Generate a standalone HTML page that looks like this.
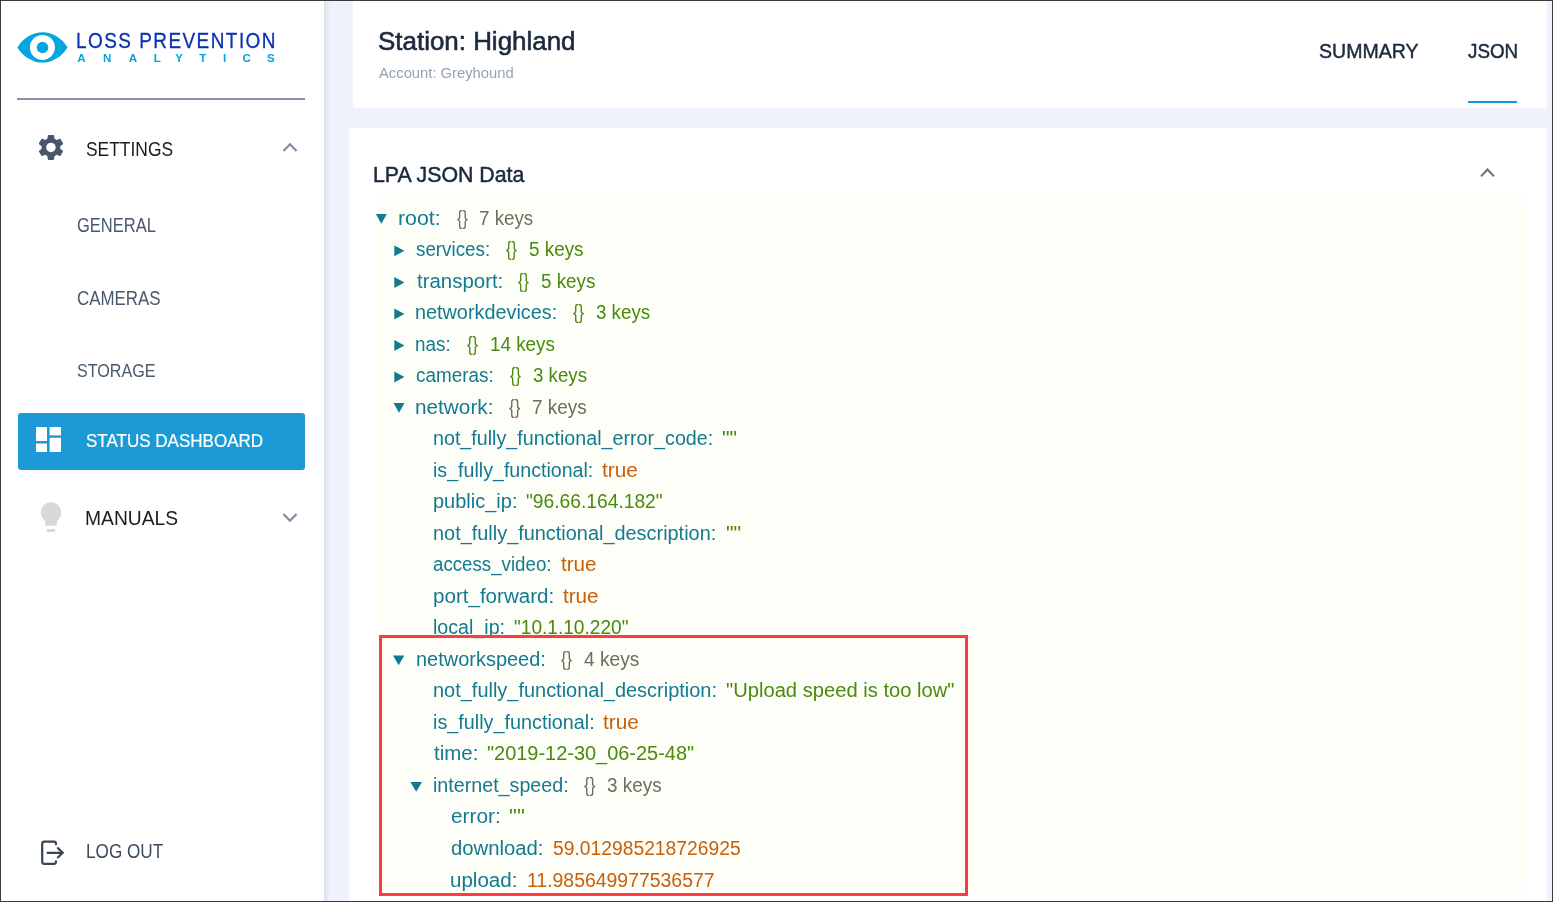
<!DOCTYPE html>
<html><head><meta charset="utf-8">
<style>
html,body{margin:0;padding:0;}
body{width:1553px;height:902px;position:relative;overflow:hidden;background:#eff2fa;font-family:"Liberation Sans", sans-serif;}
.t{position:absolute;white-space:pre;line-height:1;transform-origin:0 0;font-family:"Liberation Sans", sans-serif;}
.abs{position:absolute;}
</style></head><body>
<!-- sidebar -->
<div class="abs" style="left:0;top:0;width:324px;height:902px;background:#ffffff;"></div>
<div class="abs" style="left:324px;top:0;width:6px;height:902px;background:linear-gradient(to right,#dbdfe9 0%,#e3e7f0 35%,#eff2fa 100%);"></div>
<!-- header card -->
<div class="abs" style="left:353px;top:0;width:1194px;height:108px;background:#ffffff;"></div>
<!-- json card -->
<div class="abs" style="left:349px;top:127.5px;width:1198px;height:800px;background:#ffffff;border-radius:4px;"></div>
<!-- json bg -->
<div class="abs" style="left:376px;top:198px;width:1151px;height:693px;background:#fdfef7;"></div>
<!-- status dashboard button -->
<div class="abs" style="left:17.5px;top:413px;width:287.5px;height:57px;background:#1b9ad6;border-radius:3px;"></div>
<!-- divider -->
<div class="abs" style="left:17px;top:98px;width:288px;height:2px;background:#8792a5;"></div>
<!-- tab underline -->
<div class="abs" style="left:1468px;top:100.5px;width:48.5px;height:2.5px;background:#1a96d4;"></div>
<svg class="abs" style="left:0;top:0;" width="1553" height="902" viewBox="0 0 1553 902">
  <!-- eye logo -->
  <path d="M17.4,47.4 C23,38 33,32.2 42.45,32.2 C51.9,32.2 61.9,38 67.5,47.4 C61.9,56.8 51.9,62.6 42.45,62.6 C33,62.6 23,56.8 17.4,47.4 Z" fill="#03a6df"/>
  <circle cx="42.4" cy="47.4" r="12.5" fill="#ffffff"/>
  <circle cx="42.5" cy="47.5" r="5.8" fill="#03a6df"/>
  <!-- gear (mdi cog) -->
  <g transform="translate(36.0,132.5) scale(1.245)" fill="#48566a">
   <path d="M12,15.8A3.8,3.8 0 0,1 8.2,12A3.8,3.8 0 0,1 12,8.2A3.8,3.8 0 0,1 15.8,12A3.8,3.8 0 0,1 12,15.8M19.43,12.97C19.47,12.65 19.5,12.33 19.5,12C19.5,11.67 19.47,11.34 19.43,11L21.54,9.37C21.73,9.22 21.78,8.95 21.66,8.73L19.66,5.27C19.54,5.05 19.27,4.96 19.05,5.05L16.56,6.05C16.04,5.66 15.5,5.32 14.87,5.07L14.5,2.42C14.46,2.18 14.25,2 14,2H10C9.75,2 9.54,2.18 9.5,2.42L9.13,5.07C8.5,5.32 7.960,5.66 7.44,6.05L4.95,5.05C4.73,4.96 4.46,5.05 4.34,5.27L2.34,8.73C2.21,8.95 2.27,9.22 2.46,9.37L4.57,11C4.53,11.34 4.5,11.67 4.5,12C4.5,12.33 4.53,12.65 4.57,12.97L2.46,14.63C2.27,14.78 2.21,15.05 2.34,15.27L4.34,18.73C4.46,18.95 4.73,19.03 4.95,18.95L7.44,17.94C7.96,18.34 8.5,18.68 9.13,18.93L9.5,21.58C9.54,21.82 9.75,22 10,22H14C14.25,22 14.46,21.82 14.5,21.58L14.87,18.93C15.5,18.67 16.04,18.34 16.56,17.94L19.05,18.95C19.27,19.03 19.54,18.95 19.66,18.73L21.66,15.27C21.78,15.05 21.73,14.78 21.54,14.63L19.43,12.97Z"/>
  </g>
  <!-- chevron up settings -->
  <path d="M283.5,151 L290,144.3 L296.5,151" fill="none" stroke="#7b8ca3" stroke-width="2.2"/>
  <!-- chevron down manuals -->
  <path d="M283.5,514 L290,520.7 L296.5,514" fill="none" stroke="#7b8ca3" stroke-width="2.2"/>
  <!-- dashboard icon -->
  <g fill="#ffffff">
   <rect x="36" y="427" width="11" height="14"/>
   <rect x="36" y="443.5" width="11" height="8.5"/>
   <rect x="49.6" y="427" width="11.4" height="8.4"/>
   <rect x="49.6" y="437.8" width="11.4" height="14.2"/>
  </g>
  <!-- bulb -->
  <g fill="#d8d8d8">
   <path d="M40.75,512.6 A10.25,10.25 0 1,1 61.25,512.6 A10.25,10.25 0 0,1 56.8,521.05 V524.8 Q56.8,525.8 55.8,525.8 H46.2 Q45.2,525.8 45.2,524.8 V521.05 A10.25,10.25 0 0,1 40.75,512.6 Z"/>
   <rect x="46.8" y="529" width="8.4" height="2.9" rx="1"/>
  </g>
  <!-- logout -->
  <g fill="none" stroke="#354559" stroke-width="2.2" stroke-linecap="round" stroke-linejoin="round">
   <path d="M56,844.3 V843.7 Q56,841.7 54,841.7 H44.2 Q42.2,841.7 42.2,843.7 V861.8 Q42.2,863.8 44.2,863.8 H54 Q56,863.8 56,861.8 V861.3"/>
   <path d="M47.6,852.8 H62.6"/>
   <path d="M57.9,848.1 L62.7,852.8 L57.9,857.5"/>
  </g>
  <!-- card chevron -->
  <path d="M1481,176.4 L1487.5,169.5 L1494,176.4" fill="none" stroke="#6e6e6e" stroke-width="2.1"/>
  <path d="M375.9,214.0 L386.8,214.0 L381.35,223.7 Z" fill="#147a91"/><path d="M394.3,245.4 L404.4,250.85000000000002 L394.3,256.3 Z" fill="#147a91"/><path d="M394.3,277.0 L404.4,282.45 L394.3,287.9 Z" fill="#147a91"/><path d="M394.3,308.5 L404.4,313.95 L394.3,319.4 Z" fill="#147a91"/><path d="M394.3,340.0 L404.4,345.45 L394.3,350.9 Z" fill="#147a91"/><path d="M394.3,371.5 L404.4,376.95 L394.3,382.4 Z" fill="#147a91"/><path d="M393.5,403.0 L404.5,403.0 L399.0,412.7 Z" fill="#147a91"/><path d="M393.0,655.6 L404.3,655.6 L398.65,665.2 Z" fill="#147a91"/><path d="M410.4,782.0 L422.0,782.0 L416.2,791.7 Z" fill="#147a91"/>
</svg>
<div class="abs" style="left:0;top:0;width:1553px;height:902px;filter:grayscale(0);">
<div class="t" style="left:71.50px;width:20px;text-align:center;top:52.27px;font-size:11.6px;font-weight:bold;color:#06a4de;">A</div>
<div class="t" style="left:97.30px;width:20px;text-align:center;top:52.27px;font-size:11.6px;font-weight:bold;color:#06a4de;">N</div>
<div class="t" style="left:122.90px;width:20px;text-align:center;top:52.27px;font-size:11.6px;font-weight:bold;color:#06a4de;">A</div>
<div class="t" style="left:147.40px;width:20px;text-align:center;top:52.27px;font-size:11.6px;font-weight:bold;color:#06a4de;">L</div>
<div class="t" style="left:169.00px;width:20px;text-align:center;top:52.27px;font-size:11.6px;font-weight:bold;color:#06a4de;">Y</div>
<div class="t" style="left:192.80px;width:20px;text-align:center;top:52.27px;font-size:11.6px;font-weight:bold;color:#06a4de;">T</div>
<div class="t" style="left:214.60px;width:20px;text-align:center;top:52.27px;font-size:11.6px;font-weight:bold;color:#06a4de;">I</div>
<div class="t" style="left:236.70px;width:20px;text-align:center;top:52.27px;font-size:11.6px;font-weight:bold;color:#06a4de;">C</div>
<div class="t" style="left:260.80px;width:20px;text-align:center;top:52.27px;font-size:11.6px;font-weight:bold;color:#06a4de;">S</div>
<div class="t" style="left:75.68px;top:30px;font-size:22.6px;color:#0b30b2;transform:scaleX(0.8400);letter-spacing:1.722px;-webkit-text-stroke:0.3px #0b30b2;">LOSS PREVENTION</div>
<div class="t" style="left:85.82px;top:139px;font-size:20.4px;color:#1c1c1c;transform:scaleX(0.8540);">SETTINGS</div>
<div class="t" style="left:76.77px;top:216px;font-size:19.6px;color:#4a586c;transform:scaleX(0.8427);">GENERAL</div>
<div class="t" style="left:77.05px;top:289px;font-size:19.6px;color:#4a586c;transform:scaleX(0.8631);">CAMERAS</div>
<div class="t" style="left:77.17px;top:361px;font-size:19.1px;color:#4a586c;transform:scaleX(0.8448);">STORAGE</div>
<div class="t" style="left:85.63px;top:431px;font-size:19.1px;color:#ffffff;transform:scaleX(0.8912);-webkit-text-stroke:0.2px #ffffff;">STATUS DASHBOARD</div>
<div class="t" style="left:85.06px;top:508px;font-size:20.6px;color:#1c1c1c;transform:scaleX(0.9353);">MANUALS</div>
<div class="t" style="left:86.23px;top:841px;font-size:20.2px;color:#3d4b5f;transform:scaleX(0.8495);">LOG OUT</div>
<div class="t" style="left:378.03px;top:29px;font-size:25.6px;color:#1b2a3c;transform:scaleX(1.0132);-webkit-text-stroke:0.6px #1b2a3c;">Station: Highland</div>
<div class="t" style="left:379.20px;top:65px;font-size:15.0px;color:#95a3b5;transform:scaleX(0.9850);">Account: Greyhound</div>
<div class="t" style="left:1318.82px;top:41px;font-size:20.2px;color:#1b2a3c;transform:scaleX(0.9682);-webkit-text-stroke:0.45px #1b2a3c;">SUMMARY</div>
<div class="t" style="left:1467.72px;top:41px;font-size:20.2px;color:#1b2a3c;transform:scaleX(0.9325);-webkit-text-stroke:0.45px #1b2a3c;">JSON</div>
<div class="t" style="left:372.99px;top:164px;font-size:22.6px;color:#1b2a3c;transform:scaleX(0.9444);-webkit-text-stroke:0.5px #1b2a3c;">LPA JSON Data</div>
<div class="t" style="left:397.91px;top:208px;font-size:20.0px;color:#137a91;transform:scaleX(1.0659);">root:</div>
<div class="t" style="left:456.56px;top:208px;font-size:20.0px;color:#716c5b;transform:scaleX(0.8060);">{}</div>
<div class="t" style="left:479.26px;top:208px;font-size:20.0px;color:#716c5b;transform:scaleX(0.9376);">7 keys</div>
<div class="t" style="left:416.43px;top:239px;font-size:20.0px;color:#137a91;transform:scaleX(0.9393);">services:</div>
<div class="t" style="left:506.26px;top:239px;font-size:20.0px;color:#4a8a0c;transform:scaleX(0.8138);">{}</div>
<div class="t" style="left:529.15px;top:239px;font-size:20.0px;color:#4a8a0c;transform:scaleX(0.9431);">5 keys</div>
<div class="t" style="left:416.59px;top:271px;font-size:20.0px;color:#137a91;transform:scaleX(1.0215);">transport:</div>
<div class="t" style="left:517.96px;top:271px;font-size:20.0px;color:#4a8a0c;transform:scaleX(0.8060);">{}</div>
<div class="t" style="left:541.45px;top:271px;font-size:20.0px;color:#4a8a0c;transform:scaleX(0.9413);">5 keys</div>
<div class="t" style="left:415.41px;top:302px;font-size:20.0px;color:#137a91;transform:scaleX(0.9912);">networkdevices:</div>
<div class="t" style="left:572.95px;top:302px;font-size:20.0px;color:#4a8a0c;transform:scaleX(0.8294);">{}</div>
<div class="t" style="left:596.04px;top:302px;font-size:20.0px;color:#4a8a0c;transform:scaleX(0.9361);">3 keys</div>
<div class="t" style="left:415.47px;top:334px;font-size:20.0px;color:#137a91;transform:scaleX(0.9440);">nas:</div>
<div class="t" style="left:466.65px;top:334px;font-size:20.0px;color:#4a8a0c;transform:scaleX(0.8294);">{}</div>
<div class="t" style="left:490.19px;top:334px;font-size:20.0px;color:#4a8a0c;transform:scaleX(0.9412);">14 keys</div>
<div class="t" style="left:415.94px;top:365px;font-size:20.0px;color:#137a91;transform:scaleX(0.9449);">cameras:</div>
<div class="t" style="left:509.55px;top:365px;font-size:20.0px;color:#4a8a0c;transform:scaleX(0.8294);">{}</div>
<div class="t" style="left:532.95px;top:365px;font-size:20.0px;color:#4a8a0c;transform:scaleX(0.9344);">3 keys</div>
<div class="t" style="left:415.35px;top:397px;font-size:20.0px;color:#137a91;transform:scaleX(1.0382);">network:</div>
<div class="t" style="left:508.95px;top:397px;font-size:20.0px;color:#716c5b;transform:scaleX(0.8451);">{}</div>
<div class="t" style="left:531.95px;top:397px;font-size:20.0px;color:#716c5b;transform:scaleX(0.9465);">7 keys</div>
<div class="t" style="left:433.02px;top:428px;font-size:20.0px;color:#137a91;transform:scaleX(0.9845);">not_fully_functional_error_code:</div>
<div class="t" style="left:721.64px;top:428px;font-size:20.0px;color:#4a8a0c;transform:scaleX(1.0715);">""</div>
<div class="t" style="left:433.02px;top:460px;font-size:20.0px;color:#137a91;transform:scaleX(0.9809);">is_fully_functional:</div>
<div class="t" style="left:602.39px;top:460px;font-size:20.0px;color:#c8600b;transform:scaleX(1.0408);">true</div>
<div class="t" style="left:433.10px;top:491px;font-size:20.0px;color:#137a91;transform:scaleX(0.9994);">public_ip:</div>
<div class="t" style="left:526.03px;top:491px;font-size:20.0px;color:#4a8a0c;transform:scaleX(0.9616);">"96.66.164.182"</div>
<div class="t" style="left:432.91px;top:523px;font-size:20.0px;color:#137a91;transform:scaleX(0.9951);">not_fully_functional_description:</div>
<div class="t" style="left:725.64px;top:523px;font-size:20.0px;color:#4a8a0c;transform:scaleX(1.0715);">""</div>
<div class="t" style="left:433.45px;top:554px;font-size:20.0px;color:#137a91;transform:scaleX(0.9349);">access_video:</div>
<div class="t" style="left:560.89px;top:554px;font-size:20.0px;color:#c8600b;transform:scaleX(1.0318);">true</div>
<div class="t" style="left:432.97px;top:586px;font-size:20.0px;color:#137a91;transform:scaleX(1.0289);">port_forward:</div>
<div class="t" style="left:563.09px;top:586px;font-size:20.0px;color:#c8600b;transform:scaleX(1.0318);">true</div>
<div class="t" style="left:432.92px;top:617px;font-size:20.0px;color:#137a91;transform:scaleX(0.9812);">local_ip:</div>
<div class="t" style="left:513.84px;top:617px;font-size:20.0px;color:#4a8a0c;transform:scaleX(0.9547);">"10.1.10.220"</div>
<div class="t" style="left:415.90px;top:649px;font-size:20.0px;color:#137a91;transform:scaleX(0.9983);">networkspeed:</div>
<div class="t" style="left:561.45px;top:649px;font-size:20.0px;color:#716c5b;transform:scaleX(0.8294);">{}</div>
<div class="t" style="left:583.62px;top:649px;font-size:20.0px;color:#716c5b;transform:scaleX(0.9576);">4 keys</div>
<div class="t" style="left:432.70px;top:680px;font-size:20.0px;color:#137a91;transform:scaleX(0.9976);">not_fully_functional_description:</div>
<div class="t" style="left:725.79px;top:680px;font-size:20.0px;color:#4a8a0c;transform:scaleX(1.0087);">"Upload speed is too low"</div>
<div class="t" style="left:432.71px;top:712px;font-size:20.0px;color:#137a91;transform:scaleX(0.9896);">is_fully_functional:</div>
<div class="t" style="left:602.69px;top:712px;font-size:20.0px;color:#c8600b;transform:scaleX(1.0438);">true</div>
<div class="t" style="left:433.69px;top:743px;font-size:20.0px;color:#137a91;transform:scaleX(1.0246);">time:</div>
<div class="t" style="left:487.30px;top:743px;font-size:20.0px;color:#4a8a0c;transform:scaleX(0.9972);">"2019-12-30_06-25-48"</div>
<div class="t" style="left:433.02px;top:775px;font-size:20.0px;color:#137a91;transform:scaleX(0.9835);">internet_speed:</div>
<div class="t" style="left:584.04px;top:775px;font-size:20.0px;color:#716c5b;transform:scaleX(0.8529);">{}</div>
<div class="t" style="left:607.24px;top:775px;font-size:20.0px;color:#716c5b;transform:scaleX(0.9450);">3 keys</div>
<div class="t" style="left:450.67px;top:806px;font-size:20.0px;color:#137a91;transform:scaleX(1.0392);">error:</div>
<div class="t" style="left:508.71px;top:806px;font-size:20.0px;color:#4a8a0c;transform:scaleX(1.1111);">""</div>
<div class="t" style="left:450.69px;top:838px;font-size:20.0px;color:#137a91;transform:scaleX(1.0144);">download:</div>
<div class="t" style="left:552.73px;top:838px;font-size:20.0px;color:#c8600b;transform:scaleX(0.9641);">59.012985218726925</div>
<div class="t" style="left:450.27px;top:870px;font-size:20.0px;color:#137a91;transform:scaleX(1.0278);">upload:</div>
<div class="t" style="left:526.74px;top:870px;font-size:20.0px;color:#c8600b;transform:scaleX(0.9710);">11.985649977536577</div>
</div>
<svg class="abs" style="left:0;top:0;" width="1553" height="902" viewBox="0 0 1553 902"><rect x="380.5" y="636.5" width="586" height="258" fill="none" stroke="#ff3b3b" stroke-width="3"/></svg>
<!-- page border -->
<div class="abs" style="left:0;top:0;width:1551px;height:900px;border:1px solid #3a3a3a;"></div>
</body></html>
